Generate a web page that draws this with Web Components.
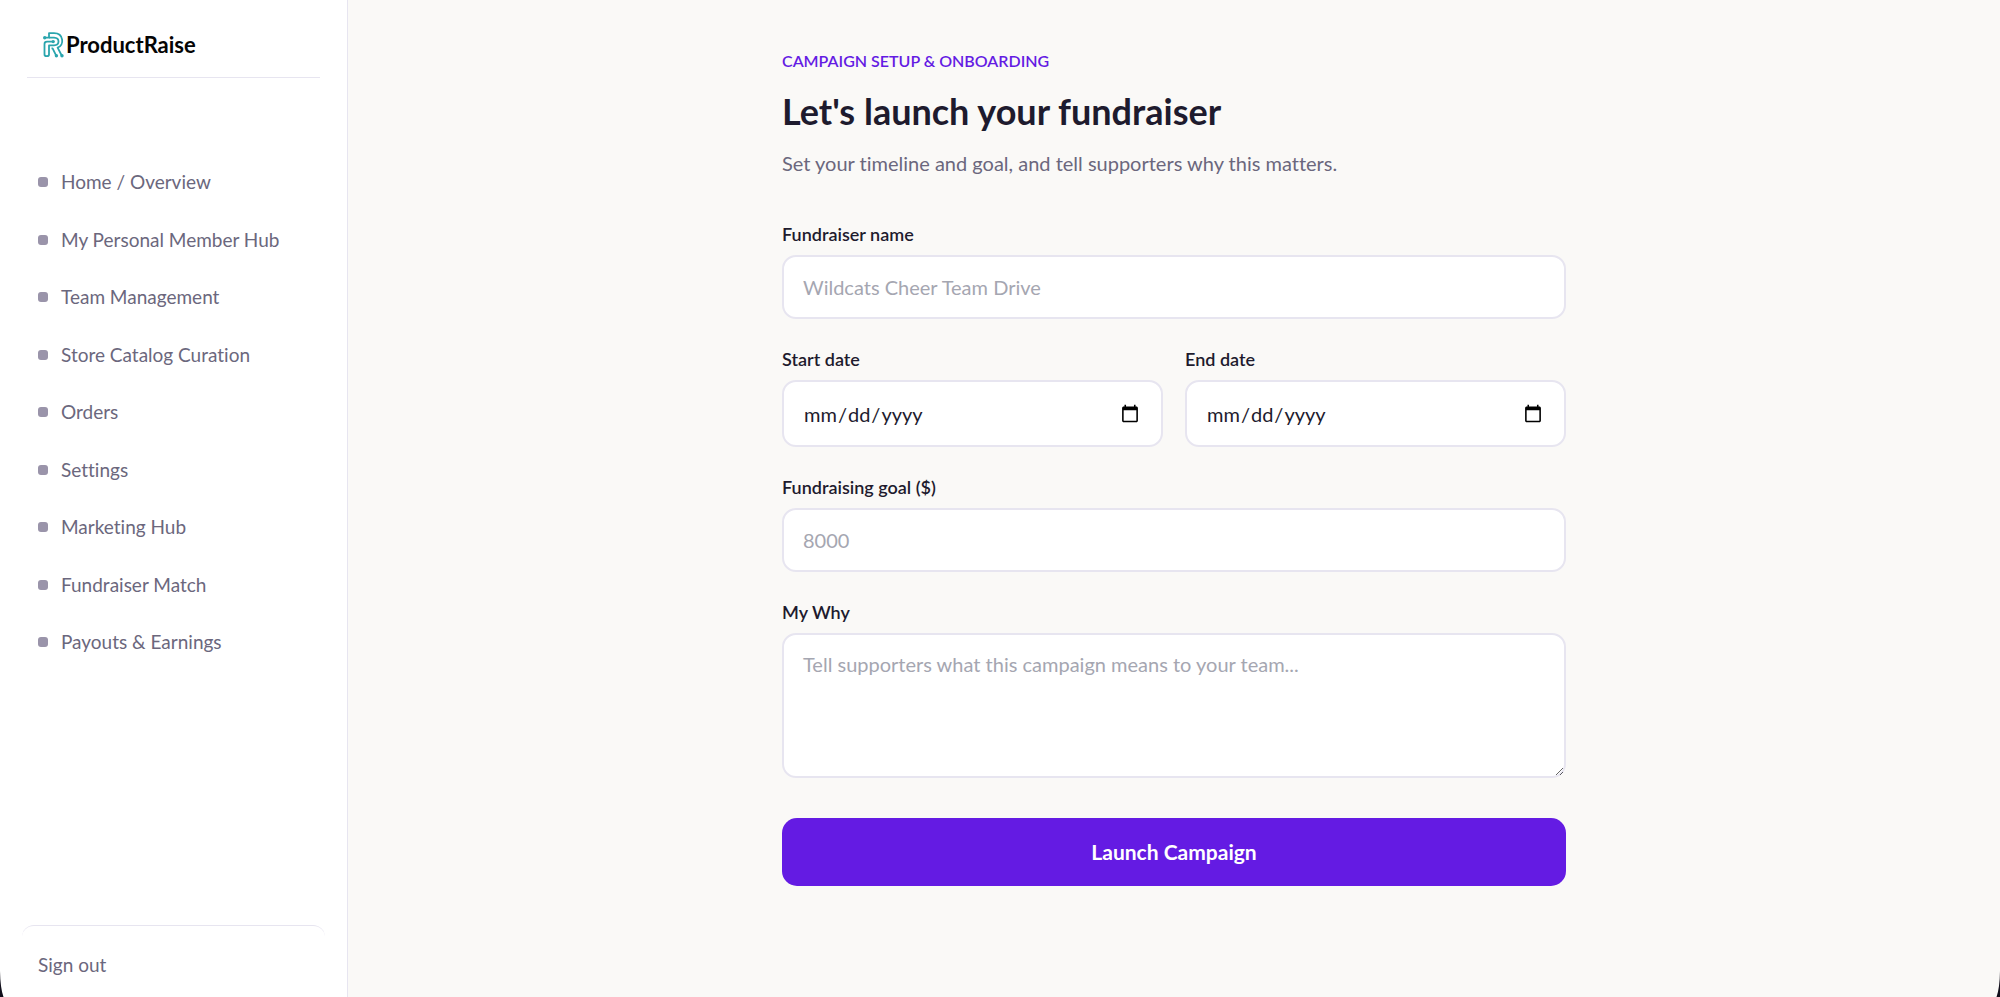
<!DOCTYPE html>
<html lang="en">
<head>
<meta charset="utf-8">
<meta name="viewport" content="width=device-width, initial-scale=1">
<title>ProductRaise – Campaign Setup</title>
<style>
  html, body { margin: 0; }
  body {
    font-family: Lato, "Open Sans", sans-serif;
    font-variant-ligatures: none;
    background: #faf9f7;
    color: #1e1b2e;
    --line: #e7e5f0;
    --muted: #6b677d;
    --accent: #641be3;
    --ink: #1e1b2e;
  }
</style>
</head>
<body>
<app-shell>
  <side-bar slot="sidebar">
    <brand-logo slot="brand">ProductRaise</brand-logo>
    <nav-item href="#home">Home / Overview</nav-item>
    <nav-item href="#member">My Personal Member Hub</nav-item>
    <nav-item href="#team">Team Management</nav-item>
    <nav-item href="#catalog">Store Catalog Curation</nav-item>
    <nav-item href="#orders">Orders</nav-item>
    <nav-item href="#settings">Settings</nav-item>
    <nav-item href="#marketing">Marketing Hub</nav-item>
    <nav-item href="#match">Fundraiser Match</nav-item>
    <nav-item href="#payouts">Payouts &amp; Earnings</nav-item>
  </side-bar>
  <page-heading>
    <span slot="eyebrow">CAMPAIGN SETUP &amp; ONBOARDING</span>
    <span slot="title">Let's launch your fundraiser</span>
    <span slot="lead">Set your timeline and goal, and tell supporters why this matters.</span>
  </page-heading>
  <campaign-form></campaign-form>
</app-shell>
<window-corner side="left"></window-corner>
<window-corner side="right"></window-corner>

<script>
  const define = (name, html, setup) => {
    const template = document.createElement('template');
    template.innerHTML = html;
    customElements.define(name, class extends HTMLElement {
      constructor() {
        super();
        this.attachShadow({ mode: 'open' }).append(template.content.cloneNode(true));
      }
      connectedCallback() {
        if (setup) setup(this, this.shadowRoot);
      }
    });
  };

  define('app-shell', `
    <style>
      :host { display: grid; grid-template-columns: 348px minmax(0, 1fr); min-height: 100vh; }
      main { padding: 49px 32px; }
      .content { max-width: 784px; margin: 0 auto; }
    </style>
    <slot name="sidebar"></slot>
    <main><div class="content"><slot></slot></div></main>`);

  define('side-bar', `
    <style>
      :host {
        display: flex; flex-direction: column; box-sizing: border-box;
        height: 100vh; position: sticky; top: 0;
        background: #fff; border-right: 1px solid var(--line);
      }
      header { margin: 0 27px; padding: 24px 16px 12px; border-bottom: 1px solid var(--line); }
      nav { flex: 1; padding: 75px 27px 0 38px; }
      button {
        margin: 0 22px; padding: 24px 16px 17px; font: inherit; font-size: 19px; line-height: 30px;
        text-align: left; color: var(--muted); background: none; cursor: pointer;
        border: 0 solid var(--line); border-top-width: 1px; border-radius: 12px;
      }
    </style>
    <header><slot name="brand"></slot></header>
    <nav aria-label="Main"><slot></slot></nav>
    <button type="button">Sign out</button>`);

  define('brand-logo', `
    <style>
      :host { display: flex; align-items: center; gap: 2px; height: 41px; color: #050505;
        font-size: 22px; font-weight: 700; line-height: 28px; }
      svg { flex: none; }
    </style>
    <svg width="21" height="26" viewBox="0 0 21 26" fill="none" stroke="#2aa5ad" stroke-width="1.8" stroke-linejoin="round" aria-hidden="true">
      <path d="M1.5 5.7H6V1.2H11C21 1.2 21.5 13.5 14.6 15.6L19 24"/>
      <path d="M6 5.7H11C17 6 17 13.2 11 13.4H6V22.5Q6 24.2 3.8 24.2Q1.5 24.2 1.5 22.5V12Q1.5 9.6 4 9.6H10"/>
      <path d="M8.5 16.4H9.6L13.2 23.6"/>
      <g fill="#2aa5ad" stroke="none"><circle cx="1.7" cy="5.7" r="1.7"/><circle cx="10.2" cy="9.6" r="1.7"/><circle cx="13.4" cy="23.8" r="1.7"/><circle cx="19" cy="23.8" r="1.7"/></g>
    </svg>
    <span><slot></slot></span>`);

  define('nav-item', `
    <style>
      :host { display: block; }
      a { display: flex; align-items: center; gap: 13px; padding: 15px 0 14px;
        font-size: 19px; line-height: 1.5; color: var(--muted); text-decoration: none; }
      i { width: 10px; height: 10px; border-radius: 3px; background: #9a94aa; }
    </style>
    <a><i></i><span><slot></slot></span></a>`,
    (host, root) => { root.querySelector('a').href = host.getAttribute('href'); });

  define('page-heading', `
    <style>
      :host { display: block; margin-bottom: 43px; }
      p, h1 { margin: 0; }
      .eyebrow { font-size: 16px; line-height: 24px; font-weight: 600; color: var(--accent); }
      h1 { margin: 15px 0 14px; font-size: 36px; line-height: 46px; font-weight: 700; }
      .lead { font-size: 20px; line-height: 30px; color: var(--muted); }
    </style>
    <p class="eyebrow"><slot name="eyebrow"></slot></p>
    <h1><slot name="title"></slot></h1>
    <p class="lead"><slot name="lead"></slot></p>`);

  define('form-field', `
    <style>
      :host { display: block; }
      label { display: block; margin-bottom: 8px; font-size: 18px; line-height: 26px; font-weight: 600; color: var(--ink); }
      input, textarea {
        display: block; box-sizing: border-box; width: 100%; margin: 0; padding: 15px 19px;
        font: inherit; font-size: 20px; line-height: 28px; color: var(--ink);
        font-variant-ligatures: none;
        background: #fff; border: 2px solid var(--line); border-radius: 14px; outline: 0;
      }
      input { height: 64px; }
      input[type="date"] { height: 67px; }
      input[type="date"]::-webkit-calendar-picker-indicator { width: 20px; height: 20px; padding: 2px; }
      textarea { height: 145px; resize: vertical; }
      ::placeholder { color: #a5a6b1; opacity: 1; }
      input:focus, textarea:focus { border-color: var(--accent); }
    </style>
    <label for="control"></label>`,
    (host, root) => {
      if (root.querySelector('#control')) return;
      root.querySelector('label').textContent = host.getAttribute('label');
      const type = host.getAttribute('type') || 'text';
      const control = document.createElement(type === 'textarea' ? 'textarea' : 'input');
      control.id = 'control';
      if (type !== 'textarea') control.type = type;
      if (host.hasAttribute('placeholder')) control.placeholder = host.getAttribute('placeholder');
      root.append(control);
    });

  define('campaign-form', `
    <style>
      :host { display: block; }
      form { display: grid; gap: 27px; }
      .dates { display: grid; grid-template-columns: 1fr 1fr; gap: 22px; }
      button {
        margin-top: 13px; padding: 19px; font: inherit; font-size: 21px; line-height: 30px; font-weight: 700;
        color: #fff; background: var(--accent); border: 0; border-radius: 15px; cursor: pointer;
      }
    </style>
    <form>
      <form-field label="Fundraiser name" placeholder="Wildcats Cheer Team Drive"></form-field>
      <div class="dates">
        <form-field label="Start date" type="date"></form-field>
        <form-field label="End date" type="date"></form-field>
      </div>
      <form-field label="Fundraising goal ($)" type="number" placeholder="8000"></form-field>
      <form-field label="My Why" type="textarea" placeholder="Tell supporters what this campaign means to your team..."></form-field>
      <button type="button">Launch Campaign</button>
    </form>`);

  define('window-corner', `
    <style>
      :host { position: fixed; bottom: 0; left: 0; pointer-events: none; }
      :host([side="right"]) { left: auto; right: 0; transform: scaleX(-1); }
      svg { display: block; }
    </style>
    <svg width="4" height="26" viewBox="0 0 4 26" aria-hidden="true"><path d="M0 0Q.3 17 3.5 26H0Z" fill="#12101c"/></svg>`);
</script>
</body>
</html>
